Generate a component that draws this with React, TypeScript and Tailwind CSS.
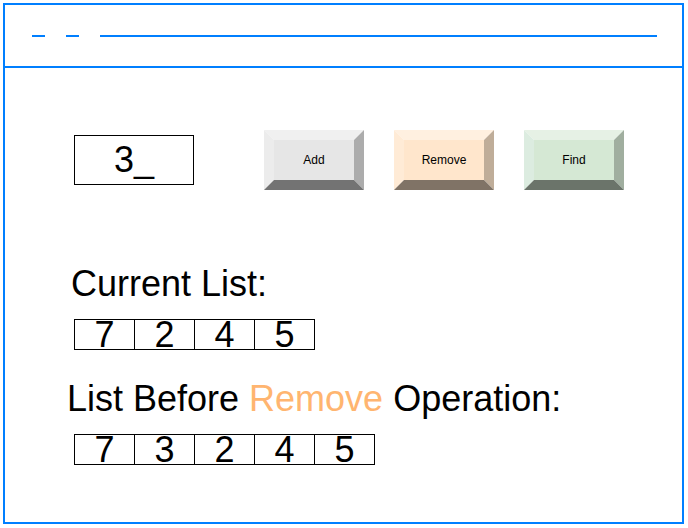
import React from "react";

type BevelColors = {
  face: string;
  top: string;
  left: string;
  right: string;
  bottom: string;
};

const buttons: { label: string; colors: BevelColors }[] = [
  {
    label: "Add",
    colors: { face: "#e6e6e6", top: "#f0f0f0", left: "#ececec", right: "#acacac", bottom: "#737373" },
  },
  {
    label: "Remove",
    colors: { face: "#ffe6cc", top: "#fff0e0", left: "#ffebd6", right: "#bfad99", bottom: "#807366" },
  },
  {
    label: "Find",
    colors: { face: "#d5e8d4", top: "#e6f1e5", left: "#dcece0", right: "#a0ae9f", bottom: "#6b746a" },
  },
];

function BevelButton({ label, colors }: { label: string; colors: BevelColors }) {
  return (
    <button
      type="button"
      className="relative flex h-[60px] w-[100px] items-center justify-center text-[12px] text-black"
    >
      <svg className="absolute inset-0" width="100" height="60" viewBox="0 0 100 60">
        <rect x="10" y="10" width="80" height="40" fill={colors.face} />
        <polygon points="0,0 100,0 90,10 10,10" fill={colors.top} />
        <polygon points="0,0 10,10 10,50 0,60" fill={colors.left} />
        <polygon points="100,0 100,60 90,50 90,10" fill={colors.right} />
        <polygon points="0,60 10,50 90,50 100,60" fill={colors.bottom} />
      </svg>
      <span className="relative">{label}</span>
    </button>
  );
}

function NumberRow({ values }: { values: number[] }) {
  return (
    <div className="flex">
      {values.map((v, i) => (
        <div
          key={i}
          className="-ml-px flex h-[31px] w-[61px] items-center justify-center overflow-visible border border-black text-[36px] leading-none first:ml-0"
        >
          {v}
        </div>
      ))}
    </div>
  );
}

export default function App() {
  return (
    <div
      className="h-[528px] w-[688px] bg-white"
      style={{ fontFamily: '"Liberation Sans", Arial, sans-serif' }}
    >
      <div className="ml-[3px] mt-[3px] flex h-[521px] w-[681px] flex-col border-2 border-[#007fff]">
        {/* header */}
        <div className="flex h-[63px] shrink-0 items-center border-b-2 border-[#007fff] pl-[27px]">
          <div className="h-[2px] w-[13px] bg-[#007fff]" />
          <div className="ml-[21px] h-[2px] w-[13px] bg-[#007fff]" />
          <div className="ml-[21px] h-[2px] w-[557px] bg-[#007fff]" />
        </div>

        {/* body */}
        <div className="flex flex-col pl-[69px] pt-[62px] text-black">
          <div className="flex items-center">
            <div className="flex h-[50px] w-[120px] items-center justify-center border border-black text-[36px] leading-none">
              3_
            </div>
            <div className="ml-[70px] flex gap-[30px]">
              {buttons.map((b) => (
                <BevelButton key={b.label} label={b.label} colors={b.colors} />
              ))}
            </div>
          </div>

          <p className="-ml-[3px] mt-[76px] text-[36px] leading-none">Current List:</p>
          <div className="mt-[17px]">
            <NumberRow values={[7, 2, 4, 5]} />
          </div>

          <p className="-ml-[7px] mt-[31px] text-[36px] leading-none">
            List Before <span className="text-[#ffb570]">Remove</span> Operation:
          </p>
          <div className="mt-[17px]">
            <NumberRow values={[7, 3, 2, 4, 5]} />
          </div>
        </div>
      </div>
    </div>
  );
}
